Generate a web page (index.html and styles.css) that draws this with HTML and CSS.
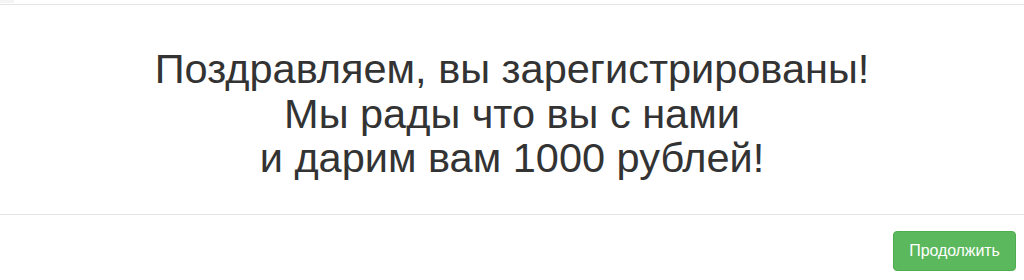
FILE: index.html
```html
<!DOCTYPE html>
<html lang="ru">
<head>
<meta charset="utf-8">
<link rel="stylesheet" href="styles.css">
</head>
<body>
<div class="modal">
  <div class="modal-header"><span class="corner"></span></div>
  <div class="modal-body">
    <p class="message">Поздравляем, вы зарегистрированы!<br>Мы рады что вы с нами<br>и дарим вам 1000 рублей!</p>
  </div>
  <div class="modal-footer">
    <button class="btn-success" type="button">Продолжить</button>
  </div>
</div>
</body>
</html>
```
FILE: styles.css
```css
html, body {
  margin: 0;
  padding: 0;
  background: #ffffff;
}
body {
  font-family: "Liberation Sans", Arial, sans-serif;
  color: #333333;
}
.modal {
  width: 1024px;
}
.modal-header {
  height: 4px;
  border-bottom: 1px solid #e5e5e5;
}
.corner {
  display: block;
  width: 14px;
  height: 3px;
  background: #f4f4f4;
}
.modal-body {
  height: 209px;
  box-sizing: border-box;
  padding-top: 42px;
  text-align: center;
}
.message {
  margin: 0;
  font-size: 41.5px;
  line-height: 44.5px;
  color: #333333;
}
.modal-footer {
  border-top: 1px solid #e5e5e5;
  padding: 16px 8px 0 0;
  display: flex;
  justify-content: flex-end;
}
.btn-success {
  width: 123px;
  height: 40px;
  background: #5cb85c;
  border: 1px solid #4cae4c;
  border-radius: 4px;
  color: #ffffff;
  font-family: "Liberation Sans", Arial, sans-serif;
  font-size: 16px;
  padding: 0;
  letter-spacing: -0.1px;
}
```
